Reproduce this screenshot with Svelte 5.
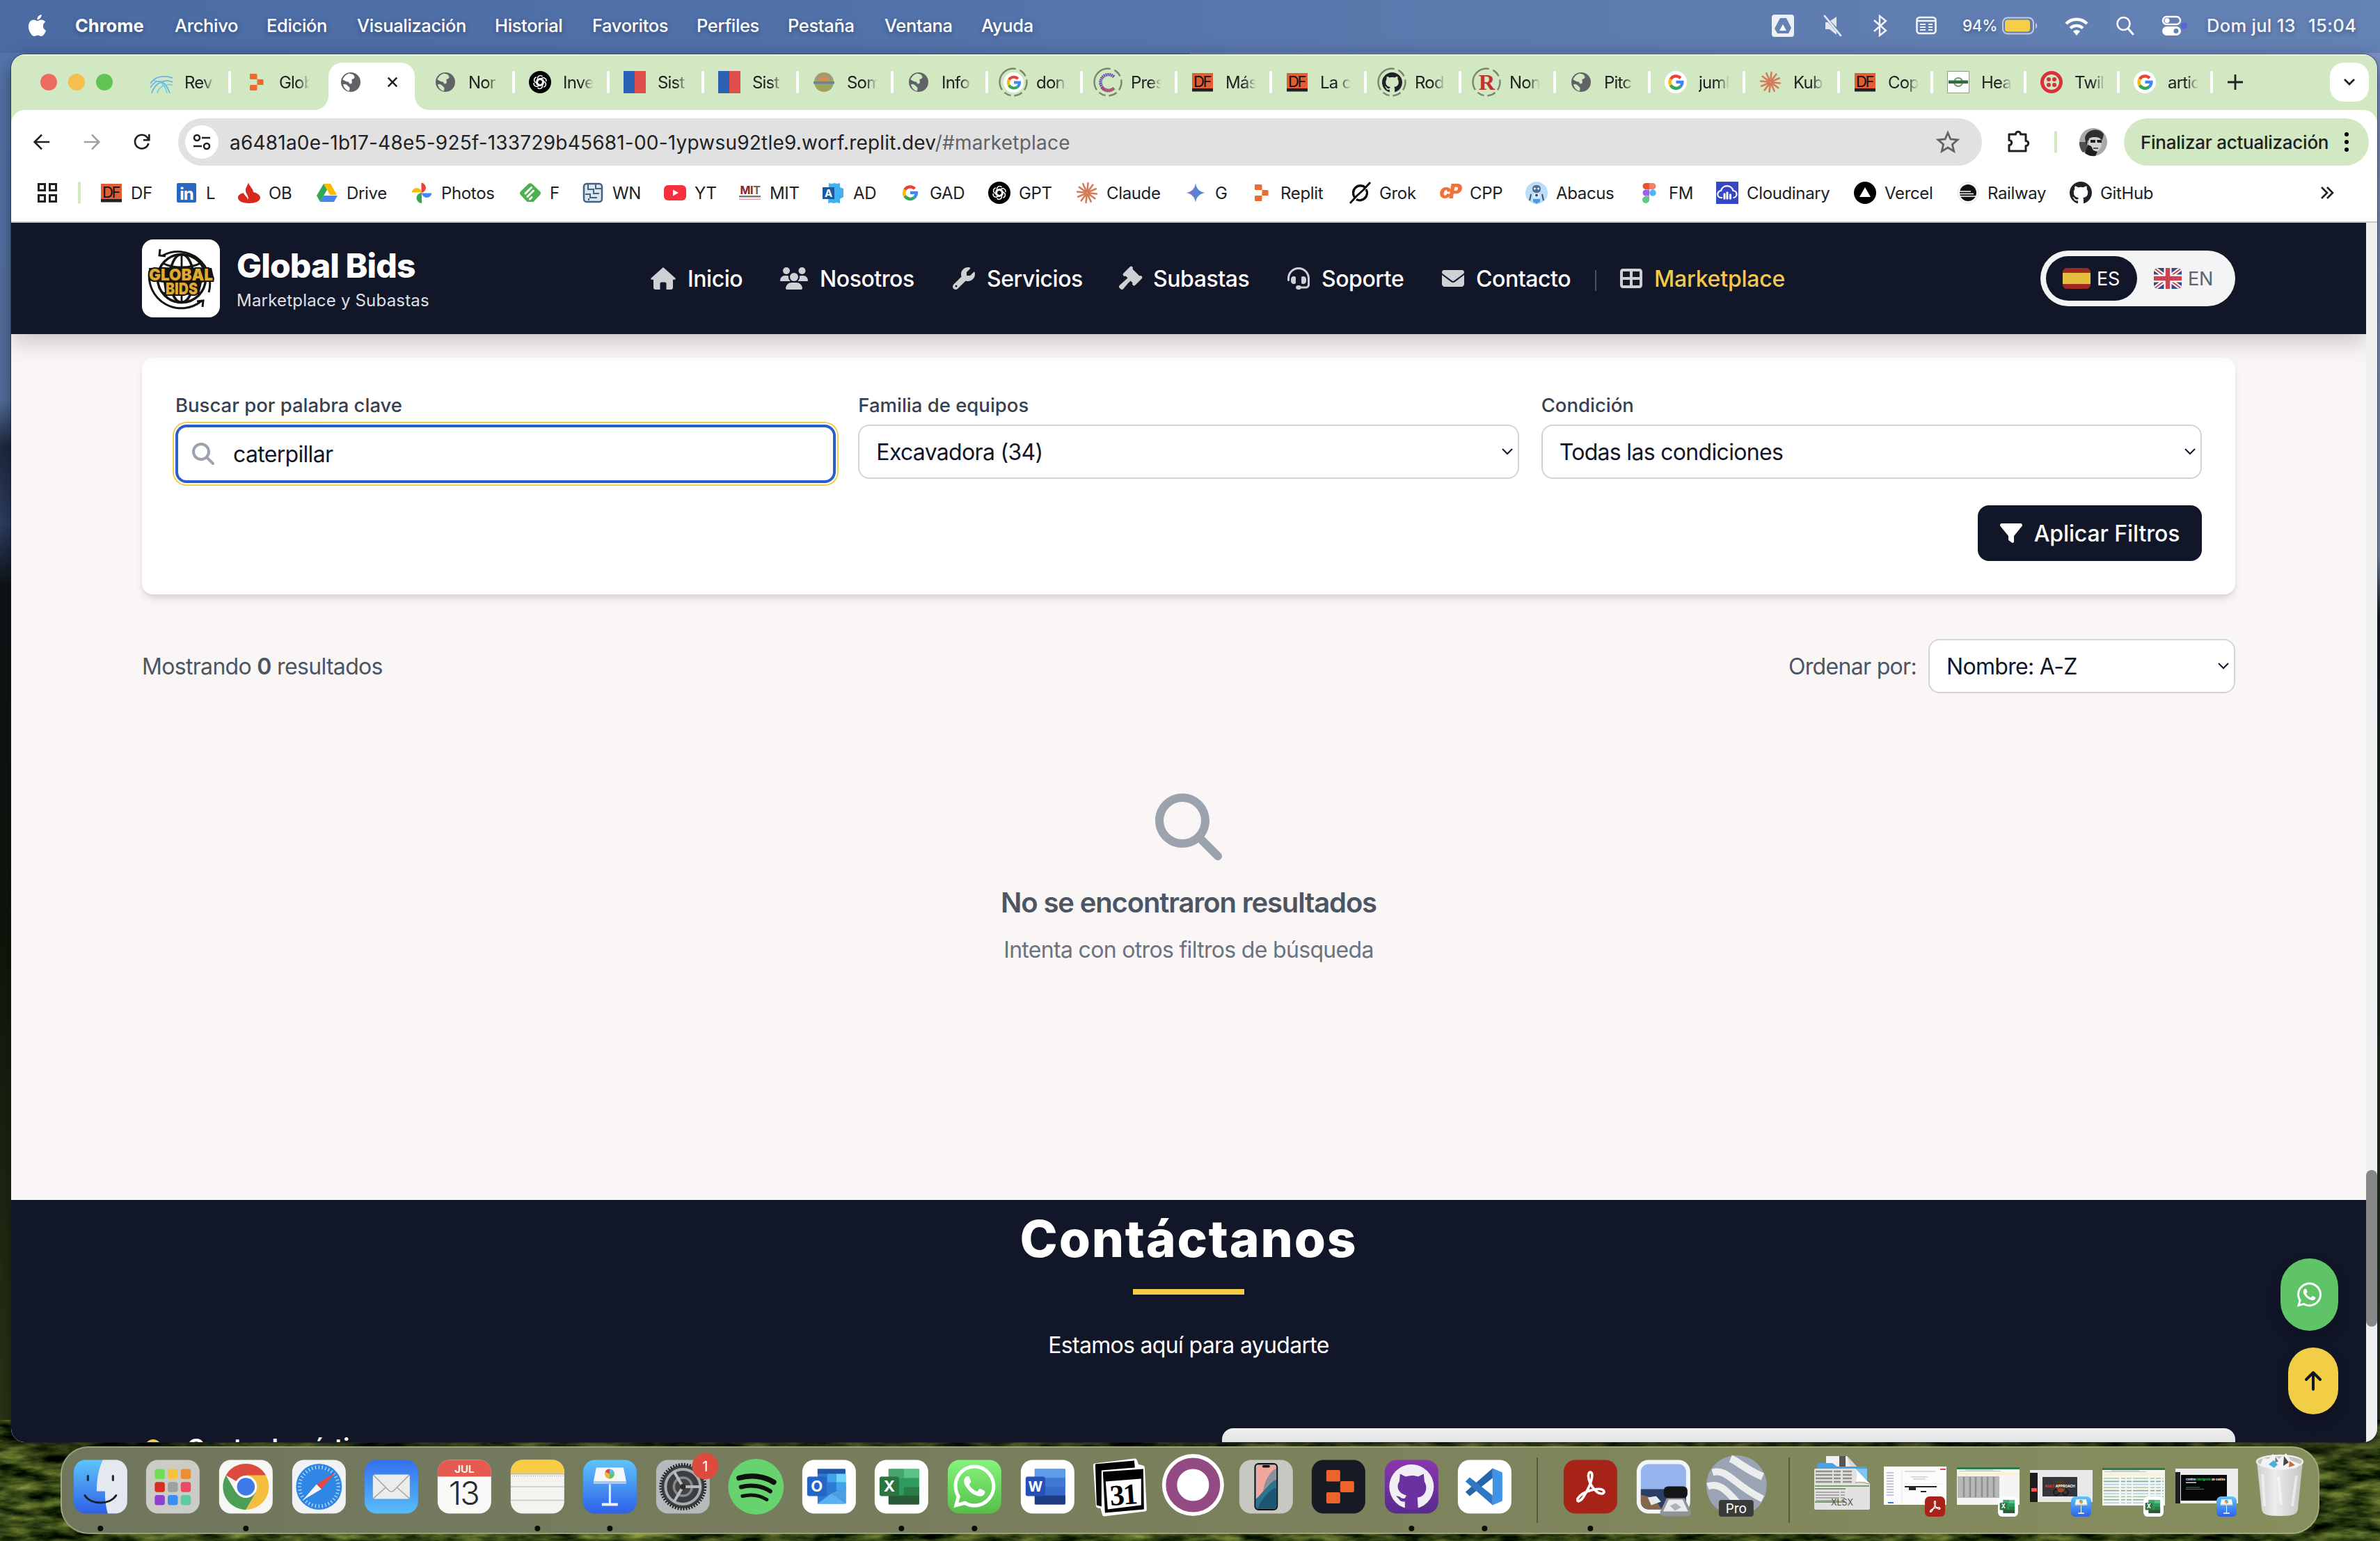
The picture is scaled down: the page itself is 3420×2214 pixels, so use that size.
<script>
  const menus = [
    ['Archivo', 132], ['Edición', 130], ['Visualización', 198], ['Historial', 140], ['Favoritos', 150],
    ['Perfiles', 131], ['Pestaña', 139], ['Ventana', 139], ['Ayuda', 90]
  ];

  const tabs = [
    { icon: 'waves', label: 'Rev', w: 136 },
    { icon: 'replit', label: 'Glob', w: 136, plain: true },
    { icon: 'globe', active: true, w: 136, plain: true },
    { icon: 'globe', label: 'Nor', w: 136 },
    { icon: 'gpt', label: 'Inve', w: 136 },
    { icon: 'flag', label: 'Sist', w: 136 },
    { icon: 'flag', label: 'Sist', w: 136 },
    { icon: 'crest', label: 'Som', w: 136 },
    { icon: 'globe', label: 'Info', w: 136 },
    { icon: 'google', label: 'don', w: 136, ring: true },
    { icon: 'dots', label: 'Pres', w: 136, ring: true },
    { icon: 'df', label: 'Más', w: 136 },
    { icon: 'df', label: 'La c', w: 136 },
    { icon: 'github', label: 'Rod', w: 136, ring: true },
    { icon: 'letterR', label: 'Non', w: 136, ring: true },
    { icon: 'globe', label: 'Pitc', w: 136 },
    { icon: 'google', label: 'jumb', w: 136 },
    { icon: 'claude', label: 'Kub', w: 136 },
    { icon: 'df', label: 'Cop', w: 134 },
    { icon: 'health', label: 'Hea', w: 134 },
    { icon: 'twilio', label: 'Twili', w: 134 },
    { icon: 'google', label: 'artic', w: 134 }
  ];

  const bookmarks = [
    ['df', 'DF', 108], ['linkedin', 'L', 90], ['flame', 'OB', 112], ['drive', 'Drive', 136], ['photos', 'Photos', 156],
    ['feedly', 'F', 90], ['circuit', 'WN', 118], ['youtube', 'YT', 108], ['mit', 'MIT', 120], ['adbadge', 'AD', 110],
    ['googleBare', 'GAD', 128], ['gpt', 'GPT', 126], ['claude', 'Claude', 156], ['gemini', 'G', 94], ['replit', 'Replit', 142],
    ['grok', 'Grok', 130], ['cpanel', 'CPP', 124], ['robot', 'Abacus', 162], ['figma', 'FM', 112],
    ['cloud', 'Cloudinary', 198], ['vercel', 'Vercel', 148], ['railway', 'Railway', 162], ['github', 'GitHub', 130]
  ];

  const nav = [
    ['home', 'Inicio', 186], ['users', 'Nosotros', 248], ['wrench', 'Servicios', 239], ['gavel', 'Subastas', 242],
    ['headset', 'Soporte', 222], ['envelope', 'Contacto', 184]
  ];

  const dockApps = [
    ['finder', 1], ['launchpad', 0], ['chrome', 1], ['safari', 0], ['mail', 0], ['calendar', 0], ['notes', 1],
    ['keynote', 1], ['settings', 0], ['spotify', 0], ['outlook', 0], ['excel', 1], ['whatsapp', 1], ['word', 0],
    ['calendar31', 0], ['ring', 0], ['phone', 0], ['replit', 0], ['github', 1], ['vscode', 1]
  ];
  const dockTools = [['acrobat', 1], ['preview', 0], ['earth', 0]];
  const dockFiles = ['xlsx', 'winPdf', 'winSheet', 'winKey', 'winSheet2', 'winTerm', 'trash'];

  const githubPath = 'M8 0C3.58 0 0 3.58 0 8c0 3.54 2.29 6.53 5.47 7.59.4.07.55-.17.55-.38 0-.19-.01-.82-.01-1.49-2.01.37-2.53-.49-2.69-.94-.09-.23-.48-.94-.82-1.13-.28-.15-.68-.52-.01-.53.63-.01 1.08.58 1.23.82.72 1.21 1.87.87 2.33.66.07-.52.28-.87.51-1.07-1.78-.2-3.64-.89-3.64-3.95 0-.87.31-1.59.82-2.15-.08-.2-.36-1.02.08-2.12 0 0 .67-.21 2.2.82.64-.18 1.32-.27 2-.27s1.36.09 2 .27c1.53-1.04 2.2-.82 2.2-.82.44 1.1.16 1.92.08 2.12.51.56.82 1.27.82 2.15 0 3.07-1.87 3.75-3.65 3.95.29.25.54.73.54 1.48 0 1.07-.01 1.93-.01 2.2 0 .21.15.46.55.38A8.01 8.01 0 0016 8c0-4.42-3.58-8-8-8z';
  const whatsappPath = 'M380.9 97.1C339 55.1 283.2 32 223.9 32c-122.4 0-222 99.6-222 222 0 39.1 10.2 77.3 29.6 111L0 480l117.7-30.9c32.4 17.7 68.9 27 106.1 27h.1c122.3 0 224.1-99.6 224.1-222 0-59.3-25.2-115-67.1-157zm-157 341.6c-33.2 0-65.7-8.9-94-25.7l-6.7-4-69.8 18.3L72 359.2l-4.4-7c-18.5-29.4-28.2-63.3-28.2-98.2 0-101.7 82.8-184.5 184.6-184.5 49.3 0 95.6 19.2 130.4 54.1 34.8 34.9 56.2 81.2 56.1 130.5 0 101.8-84.9 184.6-186.6 184.6zm101.2-138.2c-5.5-2.8-32.8-16.2-37.9-18-5.1-1.9-8.8-2.8-12.5 2.8-3.7 5.6-14.3 18-17.6 21.8-3.2 3.7-6.5 4.2-12 1.4-32.6-16.3-54-29.1-75.5-66-5.7-9.8 5.7-9.1 16.3-30.3 1.8-3.7.9-6.9-.5-9.7-1.4-2.8-12.5-30.1-17.1-41.2-4.5-10.8-9.1-9.3-12.5-9.5-3.2-.2-6.9-.2-10.6-.2-3.7 0-9.7 1.4-14.8 6.9-5.1 5.6-19.4 19-19.4 46.3 0 27.3 19.9 53.7 22.6 57.4 2.8 3.7 39.1 59.7 94.8 83.8 35.2 15.2 49 16.5 66.6 13.9 10.7-1.6 32.8-13.4 37.4-26.4 4.6-13 4.6-24.1 3.2-26.4-1.3-2.5-5-3.9-10.5-6.6z';
  const searchPath = 'M416 208c0 45.9-14.9 88.3-40 122.7L502.6 457.4c12.5 12.5 12.5 32.8 0 45.3s-32.8 12.5-45.3 0L330.7 376c-34.4 25.2-76.8 40-122.7 40C93.1 416 0 322.9 0 208S93.1 0 208 0S416 93.1 416 208zM208 352a144 144 0 1 0 0-288 144 144 0 1 0 0 288z';
  const rays = Array.from({ length: 12 }, (_, i) => i * 30);
  const ticks = Array.from({ length: 36 }, (_, i) => i * 10);
  const rows = [0, 1, 2, 3, 4, 5, 6, 7, 8];
</script>

{#snippet googleG()}
  <g fill="none" stroke-width="4.400">
    <path d="M22.400 10.200A9 9 0 0 0 8.200 11.600" stroke="#ea4335" />
    <path d="M8.200 11.600A9 9 0 0 0 8.200 20.400" stroke="#fbbc05" />
    <path d="M8.200 20.400A9 9 0 0 0 21.800 22.800" stroke="#34a853" />
    <path d="M21.800 22.800A9 9 0 0 0 24.900 15.900H16" stroke="#4285f4" />
  </g>
{/snippet}

{#snippet replitMark()}
  <path d="M7 4h9a1.500 1.500 0 0 1 1.500 1.500V12H8.500A1.500 1.500 0 0 1 7 10.500zM17.500 12H25a1.500 1.500 0 0 1 1.500 1.500V20h-9zM7 21.500A1.500 1.500 0 0 1 8.500 20h9v6.500A1.500 1.500 0 0 1 16 28H8.500A1.500 1.500 0 0 1 7 26.500z" fill="#ec6b2d" />
{/snippet}

{#snippet favicon(name)}
  <svg class="fav" viewBox="0 0 32 32">
    {#if name === 'waves'}
      <g fill="none" stroke="#69a9e8" stroke-width="1.500"><path d="M0 18C8 6 20 6 32 10" /><path d="M0 24C10 8 22 14 28 32" /><path d="M2 32C6 18 20 10 32 16" /><path d="M10 32C12 22 22 18 32 20M4 14c12 0 18 8 20 18" stroke="#5fd0f0" /></g>
    {:else if name === 'replit'}
      {@render replitMark()}
    {:else if name === 'globe'}
      <circle cx="16" cy="16" r="14" fill="#5f6368" />
      <path class="globe-land" d="M14 3.500c-4 1-8 4-9.500 9 3 1 5 3 7.500 3 2 0 1 3 3.500 3 3 0 2.500-3 2-4.500-1-3 4-2 4-5.500 0-2-2-2-2-3.500zM5 19c3 0 5 0 6.500 2s3 1.500 3 4-1 2.500-1 4C9 27.500 6 24 5 19z" />
    {:else if name === 'gpt'}
      <circle cx="16" cy="16" r="16" fill="#000" />
      <g fill="none" stroke="#fff" stroke-width="1.500">
        {#each [0, 60, 120, 180, 240, 300] as a}
          <path d="M12.500 17.800V10.500a4 4 0 0 1 7-2.500M12.500 12.500l3.500-2 3.800 2.200" transform="rotate({a} 16 16)" />
        {/each}
      </g>
    {:else if name === 'flag'}
      <path d="M0 0h16v32H0z" fill="#2b62b5" /><path d="M16 0h16v32H16z" fill="#de4f4b" />
    {:else if name === 'crest'}
      <circle cx="16" cy="16" r="14" fill="#a39a72" /><circle cx="16" cy="14" r="8" fill="#b99567" /><circle cx="16" cy="12" r="3.500" fill="#d98a4c" />
      <path d="M1 15h30v3.500H1z" fill="#5f8a9b" /><path d="M3 19h26l-6 9H9z" fill="#9ca45c" />
    {:else if name === 'google'}
      <circle cx="16" cy="16" r="16" fill="#fff" /><g transform="translate(.5 0)">{@render googleG()}</g>
    {:else if name === 'googleBare'}
      {@render googleG()}
    {:else if name === 'dots'}
      <path d="M25 7A12.500 12.500 0 1 0 25 25" fill="none" stroke="#5a45b0" stroke-width="5" stroke-dasharray="2 1" />
      <path d="M6 24a12.500 12.500 0 0 0 19 1" fill="none" stroke="#c8495a" stroke-width="5" stroke-dasharray="2 1" />
    {:else if name === 'df'}
      <path d="M1 3h30v26H1z" fill="#e25c36" /><path d="M1 25h30v4.500H1z" fill="#222" />
      <text x="15" y="22.500" class="fv" font-size="22" text-anchor="middle" fill="#111" letter-spacing="-2.500">DF</text>
    {:else if name === 'github'}
      <path d={githubPath} fill="#1f2328" transform="scale(2)" />
    {:else if name === 'letterR'}
      <text x="16" y="28" class="serif bold" font-size="36" text-anchor="middle" fill="#c0342c">R</text>
    {:else if name === 'claude'}
      <g stroke="#d57a58" stroke-width="2.600" stroke-linecap="round">
        {#each rays as a}<path d="M16 14V2" transform="rotate({a + 6} 16 16)" />{/each}
      </g>
    {:else if name === 'health'}
      <path d="M.5.5h31v31H.5z" fill="#fff" stroke="#8aa08a" /><circle cx="16" cy="16" r="6" fill="none" stroke="#6aa077" stroke-width="2" /><path d="M2 13.500h28v4.500H2z" fill="#2f6b3d" />
    {:else if name === 'twilio'}
      <circle cx="16" cy="16" r="13.500" fill="none" stroke="#dc2f3c" stroke-width="5" />
      <g fill="#dc2f3c"><circle cx="12" cy="12" r="3" /><circle cx="20" cy="12" r="3" /><circle cx="12" cy="20" r="3" /><circle cx="20" cy="20" r="3" /></g>
    {:else if name === 'linkedin'}
      <rect x="2" y="2" width="28" height="28" rx="2" fill="#2867c2" /><text x="16" y="26" class="fv bold" font-size="24" text-anchor="middle" fill="#fff" letter-spacing="-1">in</text>
    {:else if name === 'flame'}
      <path d="M15 1c0 4 7 9 7 14 5 1 10 4 10 8 0 5-7 8-16 8S0 28 0 23c0-4 4-6 8-7 0 3 6 6 6 10 3-5-4-9-3-15 .5-3 3-6 4-10z" fill="#d8281c" />
    {:else if name === 'drive'}
      <path d="M11 3h10l9 16H20z" fill="#fbbc04" /><path d="M11 3l5 9-10 17-5-9z" fill="#34a853" /><path d="M6 29l5-9h20l-5 9z" fill="#4285f4" /><path d="M11.500 20L16 12l4.500 8z" fill="#fff" />
    {:else if name === 'photos'}
      <path d="M15.500 16V1.500a7.300 7.300 0 0 1 0 14.500z" fill="#ea4335" /><path d="M1.500 15.500a7.300 7.300 0 0 1 14.500 0z" fill="#fbbc04" /><path d="M30.500 16.500a7.300 7.300 0 0 1-14.500 0z" fill="#4285f4" /><path d="M16 16v15a7.300 7.300 0 0 1 0-15z" fill="#34a853" />
    {:else if name === 'feedly'}
      <path d="M13 3.500a4 4 0 0 1 6 0l11 10.500a4 4 0 0 1 0 5L20.500 29h-9L2 19a4 4 0 0 1 0-5z" fill="#4caf50" /><path d="M9 17l8.500-8.500M12 21.500L20.500 13M15.500 25l2.500-2.500" stroke="#fff" stroke-width="3" stroke-linecap="round" />
    {:else if name === 'circuit'}
      <rect x="3" y="3" width="26" height="26" rx="4" fill="#dce6ee" stroke="#44617e" stroke-width="2.500" /><path d="M9 4v7h8v6h8M5 18h7v5h10M20 4v6h8M10 27v-3" fill="none" stroke="#44617e" stroke-width="2" />
    {:else if name === 'youtube'}
      <rect y="5" width="32" height="22" rx="6" fill="#f5313d" /><path d="M13 11.500v9l8-4.500z" fill="#fff" />
    {:else if name === 'mit'}
      <text x="16" y="18" class="fv bold" font-size="16" text-anchor="middle" fill="#8a2432">MI<tspan fill="#666">T</tspan></text><path d="M0 20h31v2.500H0z" fill="#777" /><path d="M0 24.500h31v1.500H0z" fill="#d9a0a6" />
    {:else if name === 'adbadge'}
      <path d="M9 2l4 1 4-1 4 1 4-1v6l5 2v12l-5 3v6l-5-1-4 1-4-1-4 1z" fill="#45b0f0" /><rect y="8" width="17" height="17" fill="#1559a8" /><text x="8.500" y="22" class="fv bold" font-size="15" text-anchor="middle" fill="#fff">A</text>
    {:else if name === 'gemini'}
      <path d="M16 2c1 8 6 13 14 14-8 1-13 6-14 14-1-8-6-13-14-14 8-1 13-6 14-14z" fill="url(#gem)" />
    {:else if name === 'grok'}
      <path d="M24 8.500A10.500 10.500 0 0 0 8.500 22.500M11 25.500A10.500 10.500 0 0 0 25 11" fill="none" stroke="#0a0a0a" stroke-width="3.400" /><path d="M31 1L21 12M2 31l9-10 10-9" fill="none" stroke="#0a0a0a" stroke-width="2.800" />
    {:else if name === 'cpanel'}
      <text x="15" y="24" class="fv black" font-size="28" text-anchor="middle" fill="#f2703a" letter-spacing="-3" font-style="italic">cP</text>
    {:else if name === 'robot'}
      <circle cx="16" cy="16" r="16" fill="#bcdcf8" /><rect x="10" y="5" width="12" height="11" rx="5" fill="#4d6f94" /><circle cx="13.500" cy="10" r="1.500" fill="#fff" /><circle cx="18.500" cy="10" r="1.500" fill="#fff" /><path d="M12 17h8l1 6H11z" fill="#e6eef6" /><circle cx="16" cy="19.500" r="2" fill="#38536f" /><path d="M11 25h10v4l-5 3-5-3z" fill="#4c9ae6" /><path d="M8 18l-2 9M24 18l2 9" stroke="#38536f" stroke-width="2" />
    {:else if name === 'figma'}
      <path d="M11 2h5v9h-5a4.500 4.500 0 0 1 0-9z" fill="#e8552d" /><path d="M16 2h5a4.500 4.500 0 0 1 0 9h-5z" fill="#f4806c" /><path d="M16 11.500v9h-5a4.500 4.500 0 0 1 0-9z" fill="#a05cf5" /><circle cx="21" cy="16" r="4.700" fill="#4fb5f7" /><path d="M11 21h5v5a5 5 0 1 1-5-5z" fill="#5bcb86" />
    {:else if name === 'cloud'}
      <path d="M0 0h32v32H0z" fill="#3448c5" /><path d="M9 23H7.500a5 5 0 0 1-.5-10A9 9 0 0 1 24.500 13a5 5 0 0 1 0 10" fill="none" stroke="#fff" stroke-width="2.200" /><path d="M11 17h2v8h-2zM15 15h2v10h-2zM19.500 18h2v7h-2z" fill="#fff" stroke="#fff" />
    {:else if name === 'vercel'}
      <circle cx="16" cy="16" r="16" fill="#000" /><path d="M16 8l8 14H8z" fill="#fff" />
    {:else if name === 'railway'}
      <circle cx="16" cy="16" r="15" fill="#fff" stroke="#ddd" /><circle cx="16" cy="16" r="12" fill="#111" /><path d="M4 14h16M4 17.500h20M4 21h23" stroke="#fff" stroke-width="1.400" />
    {/if}
  </svg>
{/snippet}

{#snippet pageIcon(name)}
  {#if name === 'home'}
    <svg class="i36" viewBox="0 0 36 32"><path d="M18 0l17.300 15.400c.8.900.4 2.400-1 2.400H32V29a3 3 0 0 1-3 3h-6.500v-8.500a2 2 0 0 0-2-2h-5a2 2 0 0 0-2 2V32H7a3 3 0 0 1-3-3V17.800H1.700c-1.400 0-1.800-1.500-1-2.400z" /></svg>
  {:else if name === 'users'}
    <svg class="i40" viewBox="0 0 40 32"><circle cx="9" cy="5" r="5" /><circle cx="31.500" cy="5" r="5" /><circle cx="20" cy="14" r="6" /><path d="M0 18.700A6.700 6.700 0 0 1 6.700 12h2.600c1 0 2 .2 2.800.6A8 8 0 0 0 14.700 20H1.300C.6 20 0 19.400 0 18.700zM25.300 20a8 8 0 0 0 2.600-7.400c.8-.4 1.800-.6 2.800-.6h2.600a6.700 6.700 0 0 1 6.700 6.700c0 .7-.6 1.300-1.300 1.300zM8 30.300A8.300 8.300 0 0 1 16.300 22h7.400a8.300 8.300 0 0 1 8.300 8.300c0 .9-.7 1.700-1.700 1.700H9.700C8.700 32 8 31.200 8 30.300z" /></svg>
  {:else if name === 'wrench'}
    <svg class="i32" viewBox="0 0 512 512"><path fill-rule="evenodd" d="M352 320c88.400 0 160-71.600 160-160c0-15.300-2.200-30.100-6.200-44.200c-3.100-10.800-16.400-13.200-24.300-5.300l-76.800 76.800c-3 3-7.100 4.700-11.300 4.700H336c-8.800 0-16-7.200-16-16V118.600c0-4.200 1.700-8.300 4.700-11.300l76.800-76.800c7.900-7.900 5.400-21.200-5.300-24.300C382.100 2.200 367.300 0 352 0C263.600 0 192 71.600 192 160c0 19.100 3.400 37.500 9.500 54.500L19.900 396.100C7.200 408.800 0 426.100 0 444.100C0 481.600 30.400 512 67.900 512c18 0 35.300-7.200 48-19.900L297.500 310.500c17 6.200 35.400 9.500 54.500 9.500zM80 408a24 24 0 1 1 0 48 24 24 0 1 1 0-48z" /></svg>
  {:else if name === 'gavel'}
    <svg class="i32" viewBox="0 0 32 32"><g transform="rotate(45 19.500 12.500)"><rect x="10" y="5.500" width="19" height="14" rx="1" /><rect x="7.500" y="3.500" width="5" height="18" rx="2.300" /><rect x="26.500" y="3.500" width="5" height="18" rx="2.300" /></g><path d="M14 14l4 4-4 4-.5.3L6.300 31a3 3 0 0 1-4.300 0l-1-1a3 3 0 0 1 0-4.300L9.500 18z" /></svg>
  {:else if name === 'headset'}
    <svg class="i32" viewBox="0 0 512 512"><path d="M256 48C141.100 48 48 141.100 48 256v40c0 13.300-10.700 24-24 24s-24-10.700-24-24V256C0 114.600 114.600 0 256 0S512 114.600 512 256V400.100c0 48.600-39.400 88-88.100 88L313.600 488c-8.300 14.300-23.800 24-41.600 24H240c-26.500 0-48-21.500-48-48s21.500-48 48-48h32c17.800 0 33.300 9.700 41.600 24l110.400 .1c22.100 0 40-17.900 40-40V256c0-114.900-93.100-208-208-208zM144 208h16c17.700 0 32 14.300 32 32V352c0 17.700-14.300 32-32 32H144c-35.300 0-64-28.700-64-64V272c0-35.300 28.700-64 64-64zm224 0c35.300 0 64 28.700 64 64v48c0 35.300-28.700 64-64 64H352c-17.700 0-32-14.300-32-32V240c0-17.700 14.300-32 32-32h16z" /></svg>
  {:else if name === 'envelope'}
    <svg class="i32" viewBox="0 0 512 512"><path d="M48 64C21.500 64 0 85.500 0 112c0 15.100 7.100 29.300 19.200 38.400L236.800 313.600c11.400 8.500 27 8.500 38.400 0L492.800 150.400c12.100-9.100 19.200-23.300 19.200-38.400c0-26.500-21.500-48-48-48H48zM0 176V384c0 35.300 28.700 64 64 64H448c35.300 0 64-28.700 64-64V176L294.400 339.200c-22.800 17.100-54 17.100-76.800 0L0 176z" /></svg>
  {:else if name === 'grid'}
    <svg class="i32" viewBox="0 0 512 512"><path fill-rule="evenodd" d="M448 96V224H288V96H448zm0 192V416H288V288H448zM224 224H64V96H224V224zM64 288H224V416H64V288zM64 32C28.700 32 0 60.700 0 96V416c0 35.300 28.700 64 64 64H448c35.300 0 64-28.700 64-64V96c0-35.300-28.700-64-64-64H64z" /></svg>
  {/if}
{/snippet}

{#snippet acrobatGlyph()}
  <path d="M20 56c4-7 11-10 18-12 7-2 17-4 20 1 1 4-5 5-10 1C40 40 34 27 36 20c1-4 5-3 5 2 0 9-8 24-13 32-3 5-9 8-8 2z" fill="none" stroke="#fff" stroke-width="3.600" stroke-linejoin="round" />
{/snippet}
{#snippet excelGlyph()}
  <path d="M20 13h44v51H20z" fill="#2f9a5d" /><path d="M42 13h20a2 2 0 0 1 2 2v11H42z" fill="#5cc188" /><path d="M20 13h22v13H20z" fill="#46a56b" /><path d="M42 39h22v12H42z" fill="#2c7a46" /><path d="M20 51h44v11a2 2 0 0 1-2 2H22a2 2 0 0 1-2-2z" fill="#2a5a37" />
  <rect x="7" y="24" width="28" height="28" rx="3" fill="#2c7540" /><text x="21" y="46" class="fv bold" font-size="22" text-anchor="middle" fill="#fff">X</text>
{/snippet}
{#snippet keynoteGlyph()}
  <path d="M19 11h39l4 20H15z" fill="#f4f7fa" /><path d="M15 31h47v3.500H15z" fill="#b6c6da" />
  <circle cx="38" cy="20" r="7" fill="#f5b53c" /><path d="M38 20V13a7 7 0 0 1 7 7z" fill="#5dbcf0" /><path d="M45 20a7 7 0 0 1-7 7v-7z" fill="#62c554" /><path d="M38 20v-7a7 7 0 0 0-6 4z" fill="#e1473d" />
  <path d="M37 35h3v28h-3zM27 62h23v4H27z" fill="#eef2f6" />
{/snippet}
{#snippet badge(kind)}
  <g transform="translate(66 72) scale(.377)">
    {#if kind === 'pdf'}<rect width="77" height="77" rx="17" fill="#a82317" />{@render acrobatGlyph()}
    {:else if kind === 'xls'}<rect width="77" height="77" rx="17" fill="#fff" />{@render excelGlyph()}
    {:else}<rect width="77" height="77" rx="17" fill="url(#blue)" />{@render keynoteGlyph()}{/if}
  </g>
{/snippet}
{#snippet sheet()}
  <path d="M7 30h90v54H7z" fill="#f4f6f4" /><path d="M7 30h90v3H7z" fill="#2b7a4b" /><path d="M7 38h90v3H7z" fill="#fbf0cf" />
  <path d="M10 35.500h60M20 34h40" stroke="#b9bfbb" stroke-width="1" />
{/snippet}

{#snippet dockIcon(name, running)}
  <svg class="dock-icon" viewBox="0 0 104.700 126">
    {#if ['xlsx', 'winPdf', 'winSheet', 'winKey', 'winSheet2', 'winTerm', 'trash'].includes(name)}
      {#if name === 'xlsx'}
        <path d="M29 14h30l15 16v20H29z" fill="#f2f2f2" /><path d="M48 14h9v18h-9z" fill="#555" /><path d="M59 14l15 16H64z" fill="#d8d8d8" />
        <path d="M16 27a3 3 0 0 1 3-3h19l7 5h40a3 3 0 0 1 3 3v22H16z" fill="#4aa3e0" /><path d="M70 32h18v22z" fill="#7cc6f6" />
        <path d="M12 34a2 2 0 0 1 2-2h57l21 22v35a2 2 0 0 1-2 2H14a2 2 0 0 1-2-2z" fill="#e2e2e0" />
        {#each [0, 1, 2, 3] as r}<path d="M14 {36 + r * 5}h52" stroke="#8f8f8c" stroke-width="2.400" stroke-dasharray="24 2 10 3" />{/each}
        {#each [0, 1, 2, 3] as r}<path d="M14 {66 + r * 4}h42" stroke="#a9a9a6" stroke-width="1.800" stroke-dasharray="34 2" />{/each}
        <path d="M71 32c4 6 2 14 1 20 7-1 14 0 20 2z" fill="#fff" /><path d="M71 52c7-1 14 0 20 2" fill="none" stroke="#b8a69c" stroke-width="1.500" />
        <path d="M13 57h78M13 61h44M13 80h44" stroke="#7f9c76" stroke-width="1.800" />
        <text x="52" y="85" class="fv" font-size="12.500" text-anchor="middle" fill="#555">XLSX</text>
      {:else if name === 'winPdf'}
        <path d="M7 29h90v55H7z" fill="#fbfbfc" /><path d="M33 33v51" stroke="#e6e6ea" /><path d="M36 54h56" stroke="#ececf0" />
        {#each rows as r}<path d="M11 {38 + r * 4}h10" stroke="#b4b8c8" stroke-width="1.500" />{/each}
        <path d="M37 36h44M46 44h24M49 47h18" stroke="#b9b9bd" /><path d="M37 57h46v2H37zM43 58h10v5H43zM60 64h8v2h-8z" fill="#222" /><path d="M13 80h8v2h-8z" fill="#3b78e7" /><path d="M88 32h8v2h-8z" fill="#e6405a" />
        {@render badge('pdf')}
      {:else if name === 'winSheet'}
        {@render sheet()}<path d="M8 43h60v31H8z" fill="#b7b9b7" />
        {#each [17, 26, 34, 43, 51, 60] as x}<path d="M{x} 44v29" stroke="#8d908d" stroke-width="2.500" />{/each}
        {@render badge('xls')}
      {:else if name === 'winKey'}
        <path d="M7 34h90v46H7z" fill="#e8e8ea" /><path d="M7 38h11v42H7z" fill="#1c1c1e" /><path d="M9 60h8v5H9z" fill="#e55" /><path d="M25 44h50v28H25z" fill="#34363a" />
        <circle cx="45" cy="66" r="4" fill="none" stroke="#111" stroke-width="1.500" /><circle cx="58" cy="66" r="4" fill="none" stroke="#111" stroke-width="1.500" /><path d="M44 50l10-3 4 8-4 8h-8z" fill="#4e3a24" /><path d="M46 60l12 1-4 5h-6z" fill="#a04a1d" />
        <text x="50" y="59.500" class="fv bold" font-size="5" text-anchor="middle" fill="#fff"><tspan fill="#e33">AGILE</tspan> APPROACH</text>
        {@render badge('key')}
      {:else if name === 'winSheet2'}
        <g transform="translate(0 1)">{@render sheet()}</g>
        {#each rows as r}<path d="M9 {46 + r * 4.400}h86" stroke={r % 3 === 0 ? '#a9cba4' : r % 3 === 1 ? '#9aa59c' : '#a5d2e4'} stroke-width="1.600" stroke-dasharray="22 3 6 2 7 2" />{/each}
        {@render badge('xls')}
      {:else if name === 'winTerm'}
        <path d="M7 32h90v50H7z" fill="#ececee" /><path d="M7 37h7v45H7z" fill="#1d1f24" /><path d="M15 41h66v37H15z" fill="#060606" />
        <text x="22" y="49.500" class="fv bold" font-size="4" fill="#fff">Control <tspan fill="#35c46a">inteligente</tspan> de Gastos</text>
        <path d="M22 52h15" stroke="#ddd" stroke-width="1.500" /><path d="M22 59h20M22 61.500h26" stroke="#2c8a4e" stroke-width="1.200" />
        {@render badge('key')}
      {:else}
        <path d="M19 22l7 68c1 7 5 10 26 10s25-3 26-10l7-68z" fill="url(#bin)" />
        <ellipse cx="52" cy="22" rx="33" ry="9" fill="#c2c2c2" stroke="#ededed" stroke-width="2.500" />
        <path d="M24 26l4-9 8 1 6-7 9 7 10-8 7 10 12 5-4 6-20 3-17-1z" fill="#f3f3f3" /><path d="M36 26l7-6 6 6-5 5z" fill="#4ab0dc" /><path d="M58 14l7 9-8 5z" fill="#4c4440" /><path d="M66 21l8 6-9 3z" fill="#c96a3a" /><path d="M46 15l4 7-5 1z" fill="#777" />
        <path d="M27 40l3 46M50 44l4 40M76 42l-6 44" stroke="#fff" stroke-opacity=".5" stroke-width="4" />
      {/if}
    {:else}
      <g transform="translate(13.850 19.500)">
        {#if name === 'finder'}
          <rect width="77" height="77" rx="17" fill="url(#blue)" /><path d="M42 0h18a17 17 0 0 1 17 17v43a17 17 0 0 1-17 17H49c-3-10-4-20-4-32H33C33 28 36 12 42 0z" fill="#e4e9f0" />
          <path d="M20.500 23v6M56.500 23v6" stroke="#22303c" stroke-width="3.200" stroke-linecap="round" /><path d="M16 51c9 14 36 14 45 0" fill="none" stroke="#1a2026" stroke-width="3" stroke-linecap="round" />
        {:else if name === 'launchpad'}
          <rect width="77" height="77" rx="17" fill="#cbccc6" />
          {#each ['#6fe052', '#f5c33b', '#ec8f33', '#d92d22', '#9aa2a4', '#ec4a62', '#9340cf', '#3a8df5', '#5fcba0'] as c, i}
            <rect x={12.500 + (i % 3) * 18.700} y={13 + Math.floor(i / 3) * 18.700} width="14.500" height="14.500" rx="3.500" fill={c} />
          {/each}
        {:else if name === 'chrome'}
          <rect width="77" height="77" rx="17" fill="#f6f6f5" />
          <path d="M38.500 38.500L9.800 22A33 33 0 0 1 67.100 22z" fill="#dd4b3e" /><path d="M38.500 38.500V22H67.100A33 33 0 0 1 38.500 71.500L52.800 46.800z" fill="#f5be3f" /><path d="M38.500 38.500L52.800 46.800 38.500 71.500A33 33 0 0 1 9.900 22L24.200 46.800z" fill="#4c9d55" />
          <circle cx="38.500" cy="38.500" r="16" fill="#fff" /><circle cx="38.500" cy="38.500" r="12.800" fill="#3f7be8" />
        {:else if name === 'safari'}
          <rect width="77" height="77" rx="17" fill="#f1f2f3" /><circle cx="38.500" cy="38.500" r="33" fill="#2f86e4" />
          <g stroke="#cfe6fb" stroke-width="1.200">{#each ticks as a}<path d="M38.500 8v5" transform="rotate({a} 38.500 38.500)" />{/each}</g>
          <path d="M62 18L42 42l-7-7z" fill="#e5493c" /><path d="M15 58l20-23 7 7z" fill="#f5f5f5" />
        {:else if name === 'mail'}
          <rect width="77" height="77" rx="17" fill="url(#mail)" /><rect x="12" y="21" width="53" height="35" rx="3" fill="#ececec" /><path d="M13 22l22 22c2 2 5 2 7 0l22-22M13 55l18-16M64 55L46 39" fill="none" stroke="#a5a5a5" stroke-width="1.600" />
        {:else if name === 'calendar'}
          <rect width="77" height="77" rx="17" fill="#f9f9f8" /><path d="M0 24V17A17 17 0 0 1 17 0h43a17 17 0 0 1 17 17v7z" fill="#e55b51" />
          <text x="38.500" y="18.500" class="fv semi" font-size="15" text-anchor="middle" fill="#fff">JUL</text><text x="37.500" y="65" class="fv" font-size="47" font-weight="300" text-anchor="middle" fill="#2b2b2b" letter-spacing="-2">13</text>
        {:else if name === 'notes'}
          <rect width="77" height="77" rx="17" fill="#f4f3ef" /><path d="M0 19v-2A17 17 0 0 1 17 0h43a17 17 0 0 1 17 17v2z" fill="#f8cc45" /><path d="M0 20h77" stroke="#b9b19c" stroke-width="1.500" /><path d="M2 23h73" stroke="#aaa" stroke-width="1.500" stroke-dasharray="1 2" /><path d="M0 38.500h77M0 58h77" stroke="#c8c7c2" stroke-width="1.300" />
        {:else if name === 'keynote'}
          <rect width="77" height="77" rx="17" fill="url(#blue)" />{@render keynoteGlyph()}
        {:else if name === 'settings'}
          <rect width="77" height="77" rx="17" fill="#b5babd" /><circle cx="38.500" cy="38.500" r="31" fill="#3c3e40" /><circle cx="38.500" cy="38.500" r="32" fill="none" stroke="#222" stroke-width="4" stroke-dasharray="2 2" />
          <circle cx="38.500" cy="38.500" r="25" fill="none" stroke="#a9adb0" stroke-width="4" /><circle cx="38.500" cy="38.500" r="13" fill="#444" stroke="#85898b" stroke-width="3.500" /><path d="M38.500 38.500h26M38.500 38.500l-13-22M38.500 38.500l-13 22" stroke="#b8bcbf" stroke-width="4" /><circle cx="38.500" cy="38.500" r="4" fill="#2c2d2e" />
          <circle cx="70.500" cy="9" r="19" fill="#dd4b3f" /><text x="70.500" y="16" class="fv" font-size="20" text-anchor="middle" fill="#fff">1</text>
        {:else if name === 'spotify'}
          <circle cx="38.500" cy="38.500" r="40" fill="#66d36e" /><g fill="none" stroke="#0c120c" stroke-linecap="round"><path d="M14 26c17-5 36-3 50 6" stroke-width="7.500" /><path d="M17 39c14-4 30-2 42 6" stroke-width="6" /><path d="M19 52c12-3 24-2 35 5" stroke-width="5" /></g>
        {:else if name === 'outlook'}
          <rect width="77" height="77" rx="17" fill="#fff" /><path d="M22 13h38a2 2 0 0 1 2 2v46a2 2 0 0 1-2 2H22z" fill="#2f7ad1" /><path d="M22 13h40v7H22z" fill="#2157a4" /><path d="M36 20h13v12H36zM49 32h14v12H49z" fill="#3fa4ea" /><path d="M49 20h14v12H49z" fill="#72d3fb" /><path d="M22 63l20-15 21 15z" fill="#57b2ee" /><path d="M42 48l21-9v24z" fill="#4a9fe4" /><rect x="7" y="24" width="28" height="28" rx="3" fill="#2466c6" /><text x="21" y="46" class="fv bold" font-size="22" text-anchor="middle" fill="#fff">O</text>
        {:else if name === 'excel'}
          <rect width="77" height="77" rx="17" fill="#fff" />{@render excelGlyph()}
        {:else if name === 'word'}
          <rect width="77" height="77" rx="17" fill="#fff" /><path d="M20 13h44v51H20z" fill="#3568c8" /><path d="M20 13h42a2 2 0 0 1 2 2v11H20z" fill="#5b9de8" /><path d="M20 26h44v13H20z" fill="#3f79d3" /><path d="M20 51h44v11a2 2 0 0 1-2 2H22a2 2 0 0 1-2-2z" fill="#1e3d85" /><rect x="7" y="24" width="28" height="28" rx="3" fill="#2551b4" /><text x="21" y="45.500" class="fv bold" font-size="20" text-anchor="middle" fill="#fff">W</text>
        {:else if name === 'whatsapp'}
          <rect width="77" height="77" rx="17" fill="url(#wa)" /><path d={whatsappPath} fill="#fff" transform="translate(8.500 2.500) scale(.134 .138)" />
        {:else if name === 'calendar31'}
          <path d="M3 8l57-7 3 8 8 2 3 60-58 7-3-11-6-1z" fill="#fff" stroke="#fff" stroke-width="6" stroke-linejoin="round" /><path d="M3 6l56-5 1 10-48 4v52l-7-2z" fill="#000" /><path d="M14 17l58-4 1 58-56 5z" fill="#000" /><path d="M18 31l51-4v38l-48 6z" fill="#fff" /><text x="43" y="64" class="serif" font-weight="700" font-size="42" text-anchor="middle" fill="#000" transform="rotate(-4 45 50)" letter-spacing="-2">31</text>
        {:else if name === 'ring'}
          <circle cx="38.500" cy="36" r="44.500" fill="#fff" /><circle cx="38.500" cy="36" r="31" fill="none" stroke="#944b83" stroke-width="16" />
        {:else if name === 'phone'}
          <rect width="77" height="77" rx="17" fill="#c7c8c1" /><rect x="22.500" y="5.500" width="32" height="66" rx="5" fill="#2d7390" stroke="#111" stroke-width="1.800" /><path d="M24 10a3 3 0 0 1 3-3h23a3 3 0 0 1 3 3v18C40 34 34 48 24 56z" fill="#f3a79c" /><path d="M53 12v16C44 33 38 38 34 46c2-14 8-28 19-34z" fill="#8f8f9c" /><path d="M53 40C42 44 34 54 26 70h24a3 3 0 0 0 3-3z" fill="#1d5673" /><rect x="33" y="7.500" width="11" height="3.500" rx="1.700" fill="#111" />
        {:else if name === 'replit'}
          <rect width="77" height="77" rx="17" fill="#161a24" /><g fill="#ec632c"><rect x="21" y="14.500" width="20" height="16.500" rx="2" /><rect x="41" y="30.500" width="20" height="16" rx="2" /><rect x="21" y="46.500" width="20" height="16" rx="2" /></g>
        {:else if name === 'github'}
          <rect width="77" height="77" rx="17" fill="url(#purple)" /><circle cx="38.500" cy="38.500" r="32" fill="#f1eef6" /><path d="M22 20l8 4c6-2 12-2 18 0l8-4 1 11c6 10 1 22-10 23l1 17h-19V60c-8 1-8-5-13-8 7-1 7 5 13 3l2-4C19 48 16 38 21 31z" fill="#6a32a0" />
        {:else if name === 'vscode'}
          <rect width="77" height="77" rx="17" fill="#fff" /><path d="M50 12l14 6v41l-14 6z" fill="#3f94e6" /><path d="M50 12v14L17 52l-6-6z" fill="#2566a8" /><path d="M50 65V51L17 25l-6 6z" fill="#3078c6" />
        {:else if name === 'acrobat'}
          <rect width="77" height="77" rx="17" fill="#a82317" />{@render acrobatGlyph()}
        {:else if name === 'preview'}
          <rect width="77" height="77" rx="17" fill="#f4f5f6" /><rect x="6" y="6" width="65" height="65" rx="11" fill="#96b5ee" /><path d="M6 42h65v18a11 11 0 0 1-11 11H17A11 11 0 0 1 6 60z" fill="#2c3e63" /><path d="M6 50l12 3 10 6 8 12H17A11 11 0 0 1 6 60z" fill="#85684a" /><path d="M16 54l12-2 7 8-14 5z" fill="#e7e9ec" />
          <rect x="39" y="38" width="34" height="17" rx="6" fill="#161616" /><path d="M43 55h26l9 19c1 5-2 7-7 7H41c-5 0-8-2-7-7z" fill="#8f9498" /><path d="M46 57h20l8 17H38z" fill="#e9ebed" /><path d="M48 66l8-4 8 6-9 5z" fill="#aeb3b7" />
        {:else if name === 'earth'}
          <circle cx="38.500" cy="37" r="43.500" fill="#9aa4b4" /><g fill="none" stroke="#eceeee" stroke-width="10"><path d="M4 18C26 12 34 36 76 56" /><path d="M-3 38c22-8 34 16 58 40" /><path d="M30-2c10 4 22 16 46 26" stroke-width="11" /></g><rect x="13" y="57.500" width="50" height="24" rx="4" fill="#3a3b38" /><text x="38" y="76.500" class="fv" font-size="19" text-anchor="middle" fill="#fff">Pro</text>
        {/if}
      </g>
    {/if}
    {#if running}<circle cx="52.350" cy="118" r="4" fill="#0b0d06" />{/if}
  </svg>
{/snippet}

<div class="desktop">
  <svg class="wallpaper" viewBox="0 0 3420 2214" preserveAspectRatio="none">
    <defs>
      <linearGradient id="sky" x1="0" y1="0" x2="0" y2="1"><stop offset="0" stop-color="#5577b0" /><stop offset=".26" stop-color="#56719f" /><stop offset=".29" stop-color="#1f2a40" /><stop offset=".34" stop-color="#2f4066" /><stop offset=".38" stop-color="#0f1418" /><stop offset=".6" stop-color="#10160c" /><stop offset=".9" stop-color="#2a3416" /><stop offset="1" stop-color="#2e3a14" /></linearGradient>
      <linearGradient id="skyRight" x1="0" y1="0" x2="0" y2="1"><stop offset="0" stop-color="#7d90cc" /><stop offset=".36" stop-color="#8297ba" /><stop offset=".4" stop-color="#161b22" /><stop offset="1" stop-color="#2e3a14" /></linearGradient>
      <linearGradient id="gem" x1="0" x2="1"><stop offset="0" stop-color="#8a76c9" /><stop offset="1" stop-color="#2f8fe0" /></linearGradient>
      <linearGradient id="blue" x1="0" y1="0" x2="0" y2="1"><stop offset="0" stop-color="#5ec4fa" /><stop offset="1" stop-color="#2e60e8" /></linearGradient>
      <linearGradient id="mail" x1="0" y1="0" x2="0" y2="1"><stop offset="0" stop-color="#3470ee" /><stop offset="1" stop-color="#58bdf8" /></linearGradient>
      <linearGradient id="wa" x1="0" y1="0" x2="0" y2="1"><stop offset="0" stop-color="#86f37d" /><stop offset="1" stop-color="#55bf49" /></linearGradient>
      <linearGradient id="purple" x1="0" y1="0" x2="0" y2="1"><stop offset="0" stop-color="#8a37ad" /><stop offset="1" stop-color="#552c8c" /></linearGradient>
      <linearGradient id="bin" x1="0" x2="1"><stop offset="0" stop-color="#cfcfcf" /><stop offset=".4" stop-color="#ececec" /><stop offset="1" stop-color="#c4c4c4" /></linearGradient>
      <filter id="grass" x="0" y="0" width="100%" height="100%" color-interpolation-filters="sRGB">
        <feTurbulence type="fractalNoise" baseFrequency=".02 .07" numOctaves="5" seed="11" />
        <feColorMatrix values=".8 0 0 0 -.2  .85 0 0 0 -.165  .4 0 0 0 -.12  0 0 0 0 1" />
      </filter>
    </defs>
    <rect width="1710" height="2214" fill="url(#sky)" /><rect x="1710" width="1710" height="2214" fill="url(#skyRight)" />
    <rect y="2040" width="3420" height="174" filter="url(#grass)" />
  </svg>

  <div class="menubar">
    <svg class="apple" viewBox="0 0 24 24"><path d="M12.152 6.896c-.948 0-2.415-1.078-3.960-1.040-2.040.027-3.910 1.183-4.961 3.014-2.117 3.675-.546 9.103 1.519 12.090 1.013 1.454 2.208 3.090 3.792 3.039 1.520-.065 2.090-.987 3.935-.987 1.831 0 2.350.987 3.960.948 1.637-.026 2.676-1.480 3.676-2.948 1.156-1.688 1.636-3.325 1.662-3.415-.039-.013-3.182-1.221-3.220-4.857-.026-3.040 2.480-4.494 2.597-4.559-1.429-2.090-3.623-2.324-4.390-2.376-2-.156-3.675 1.090-4.610 1.090zM15.530 3.830c.843-1.012 1.400-2.427 1.245-3.830-1.207.052-2.662.805-3.532 1.818-.780.896-1.454 2.338-1.273 3.714 1.338.104 2.715-.688 3.559-1.701" fill="#fff" /></svg>
    <b class="app-name">Chrome</b>
    {#each menus as [label, w]}<span class="menu" style="width:{w}px">{label}</span>{/each}
    <div class="status">
      <svg class="s74" viewBox="0 0 74 40"><rect y="4" width="32" height="32" rx="4" fill="#edf1f6" /><path d="M12 9h9l7 14-4 8H8l-4-7z" fill="#6483b3" /><path d="M16 18l-5 9h10z" fill="#fff" /></svg>
      <svg class="s72" viewBox="0 0 72 40"><path d="M2 6l23 28" stroke="#e8eef5" stroke-width="2.600" stroke-linecap="round" /><path d="M19 7v15L10 13zM3 15h4l12 14v4L9 25H3z" fill="#dfe6f0" /></svg>
      <svg class="s61" viewBox="0 0 61 40"><path d="M1 12l17 15-9 7V6l9 7L1 28" fill="none" stroke="#f2f5f9" stroke-width="2.400" /></svg>
      <svg class="s67" viewBox="0 0 67 40"><rect x="1.500" y="8" width="27" height="23" rx="4" fill="none" stroke="#f2f5f9" stroke-width="2.600" /><path d="M2 13h26" stroke="#f2f5f9" stroke-width="2.500" /><path d="M6 18h8M6 22h8M6 26h8M18 18h6M18 22h6M18 26h6" stroke="#f2f5f9" stroke-width="2" /></svg>
      <span class="pct">94%</span>
      <svg class="s90" viewBox="0 0 90 40"><rect x="1" y="8.500" width="44" height="23" rx="7" fill="none" stroke="#c2cddf" stroke-width="2" /><rect x="4" y="11.500" width="36" height="17" rx="4" fill="#f7ce46" /><path d="M48 16v8c3-1 3-7 0-8z" fill="#c2cddf" /></svg>
      <svg class="s74" viewBox="0 0 74 40"><g fill="none" stroke="#fff" stroke-width="4.400"><path d="M2 17a21 21 0 0 1 30 0" /><path d="M8 23.500a13 13 0 0 1 18 0" /></g><path d="M17 34l-5-6a7 7 0 0 1 10 0z" fill="#fff" /></svg>
      <svg class="s66" viewBox="0 0 66 40"><circle cx="10.500" cy="17" r="9" fill="none" stroke="#fff" stroke-width="2.600" /><path d="M17 24l7 8" stroke="#fff" stroke-width="3" stroke-linecap="round" /></svg>
      <svg class="s64" viewBox="0 0 64 40"><rect x="1" y="7" width="25" height="11" rx="5.500" fill="none" stroke="#fff" stroke-width="2.400" /><circle cx="7" cy="12.500" r="3.600" fill="#fff" /><rect y="21" width="27" height="13" rx="6.500" fill="#fff" /><circle cx="20" cy="27.500" r="3.500" fill="#6381b3" /><circle cx="31.500" cy="20" r="4.500" fill="#5c5fe0" /></svg>
      <span class="date">Dom jul 13</span><span class="time">15:04</span>
    </div>
  </div>

  <div class="window">
    <div class="tabstrip">
      <div class="lights"><i class="red"></i><i class="amber"></i><i class="green"></i></div>
      {#each tabs as t}
        <div class="tab" class:active={t.active} class:sep={!t.plain} style="width:{t.w}px">
          <span class="tab-icon" class:ringed={t.ring}>
            {#if t.ring}<svg class="ring" viewBox="0 0 42 42"><circle cx="21" cy="21" r="19.500" fill="none" stroke="#76876f" stroke-width="2.400" stroke-dasharray="12 5 12 5 10 5 46 6" /></svg>{/if}
            {@render favicon(t.icon)}
          </span>
          {#if t.active}
            <svg class="close" viewBox="0 0 20 20"><path d="M3 3l14 14M17 3L3 17" stroke="#202124" stroke-width="2.800" /></svg>
          {:else}<span class="tab-label">{t.label}</span>{/if}
        </div>
      {/each}
      <svg class="plus" viewBox="0 0 22 22"><path d="M11 0v22M0 11h22" stroke="#202124" stroke-width="2.800" /></svg>
      <div class="tab-menu"><svg viewBox="0 0 18 12"><path d="M2 2l7 7 7-7" fill="none" stroke="#202124" stroke-width="2.800" /></svg></div>
    </div>

    <div class="toolbar">
      <div class="toolbtn"><svg viewBox="0 0 32 32"><path d="M28 16H6M16 5L5 16l11 11" fill="none" stroke="#1f2023" stroke-width="2.800" /></svg></div>
      <div class="toolbtn"><svg viewBox="0 0 32 32"><path d="M4 16h22M16 5l11 11-11 11" fill="none" stroke="#a0a1a3" stroke-width="2.800" /></svg></div>
      <div class="toolbtn"><svg viewBox="0 0 32 32"><path d="M26 18A10.500 10.500 0 1 1 24 9l2.500 3.500M27 4v9h-9" fill="none" stroke="#1f2023" stroke-width="2.800" /></svg></div>
      <div class="omnibox">
        <div class="site"><svg viewBox="0 0 26 26"><g fill="none" stroke="#202124" stroke-width="2.600"><circle cx="6" cy="7" r="4" /><path d="M13 7h12M1 19h12" /><circle cx="20" cy="19" r="4" /></g></svg></div>
        <span class="url">a6481a0e-1b17-48e5-925f-133729b45681-00-1ypwsu92tle9.worf.replit.dev<em>/#marketplace</em></span>
        <svg class="star" viewBox="0 0 32 32"><path d="M16 3.500l3.700 8.700 9.500.8-7.200 6.200 2.200 9.300-8.200-5-8.200 5L10 19.200 2.800 13l9.500-.8z" fill="none" stroke="#5f6368" stroke-width="2.600" /></svg>
      </div>
      <svg class="puzzle" viewBox="0 0 36 36"><path d="M5 7h9.500c0-5 7-5 7 0H29v9.500c5 0 5 7 0 7V31H5v-8.500c5 0 5-7 0-7z" fill="none" stroke="#1f2023" stroke-width="3" stroke-linejoin="round" /></svg>
      <i class="vbar"></i>
      <svg class="avatar" viewBox="0 0 40 40"><circle cx="20" cy="20" r="20" fill="#a9a9a9" /><path d="M0 20h9l3 12-7 3A20 20 0 0 1 0 20z" fill="#4f4f4f" /><path d="M8 14C10 2 28-2 35 9l-2 8-9-4-12 5-2 10z" fill="#2e2e2e" /><path d="M14 15c5-3 13-2 16 0l2 11-6 8-8-2-5-8z" fill="#d2d2d2" /><path d="M16 17h7v4h-7zM25 17h7v4h-6z" fill="#1c1c1c" /><path d="M12 24l5 2 3 6 6 2-3 6a20 20 0 0 1-15-4z" fill="#1f1f1f" /><path d="M20 28h7v2h-7z" fill="#555" /></svg>
      <div class="update"><span>Finalizar actualización</span><svg viewBox="0 0 8 28"><circle cx="4" cy="3" r="3" /><circle cx="4" cy="14" r="3" /><circle cx="4" cy="25" r="3" /></svg></div>
    </div>

    <div class="bookmarks">
      <svg class="apps" viewBox="0 0 28 28"><g fill="none" stroke="#1f2023" stroke-width="3"><path d="M1.500 1.500h9v9h-9zM17.500 1.500h9v9h-9zM1.500 17.500h9v9h-9zM17.500 17.500h9v9h-9z" /></g></svg>
      <i class="vbar bm"></i>
      {#each bookmarks as [icon, label, w]}
        <div class="bookmark" style="width:{w}px">{@render favicon(icon)}<span>{label}</span></div>
      {/each}
      <svg class="more" viewBox="0 0 20 18"><path d="M2 1l8 8-8 8M10 1l8 8-8 8" fill="none" stroke="#1f2023" stroke-width="2.600" /></svg>
    </div>

    <div class="viewport">
      <div class="page">
        <header>
          <svg class="logo" viewBox="0 0 112 112">
            <rect width="112" height="112" rx="16" fill="#fff" />
            <g fill="none" stroke="#15130f" stroke-width="3.500">
              <path d="M30 23A46 46 0 0 1 96 76M86 88A46 46 0 0 1 11 45" stroke-width="3" />
              <circle cx="57" cy="56" r="34.500" /><ellipse cx="57" cy="56" rx="17" ry="34.500" /><path d="M57 21v70M30 34c14 8 40 8 54 0M30 78c14-8 40-8 54 0" stroke-width="2.800" />
              <path d="M26 14l-1 9 9 1M79 89l9-1-1 9" stroke-width="3" />
            </g>
            <path d="M10 41l34-1 56 1 4 17-18 4-4 17-48 2-3-19-20-3z" fill="#15130f" />
            <g class="fv black" text-anchor="middle" fill="#dfa92f" stroke="#15130f" stroke-width="4" paint-order="stroke"><text x="56" y="58.500" font-size="23" textLength="92" lengthAdjust="spacingAndGlyphs">GLOBAL</text><text x="57" y="79" font-size="23" textLength="46" lengthAdjust="spacingAndGlyphs">BIDS</text></g>
          </svg>
          <div class="brand"><h1>Global Bids</h1><p>Marketplace y Subastas</p></div>
          <nav>
            {#each nav as [icon, label, w]}
              <a style="width:{w}px">{@render pageIcon(icon)}<span>{label}</span></a>
            {/each}
            <i class="nav-sep"></i>
            <a class="current">{@render pageIcon('grid')}<span>Marketplace</span></a>
          </nav>
          <div class="lang">
            <div class="lang-opt on">
              <svg viewBox="0 0 40 30"><rect width="40" height="30" rx="6" fill="#9e2a24" /><path d="M0 7h40v16H0z" fill="#e6bf3e" /></svg>ES
            </div>
            <div class="lang-opt">
              <svg viewBox="0 0 40 30"><clipPath id="uk"><rect width="40" height="30" rx="6" /></clipPath><g clip-path="url(#uk)"><path d="M0 0h40v30H0z" fill="#3a4a80" /><path d="M0 0l40 30M40 0L0 30" stroke="#fff" stroke-width="6" /><path d="M0 0l40 30M40 0L0 30" stroke="#cc4453" stroke-width="2" /><path d="M20 0v30M0 15h40" stroke="#fff" stroke-width="11" /><path d="M20 0v30M0 15h40" stroke="#cc4453" stroke-width="6.500" /></g></svg>EN
            </div>
          </div>
        </header>

        <main>
          <section class="filters">
            <div class="field"><label for="q">Buscar por palabra clave</label>
              <div class="input" id="q"><svg viewBox="0 0 512 512"><path d={searchPath} /></svg>caterpillar</div>
            </div>
            <div class="field"><label for="f">Familia de equipos</label>
              <div class="select" id="f">Excavadora (34)<svg viewBox="0 0 18 12"><path d="M2 2l7 7 7-7" /></svg></div>
            </div>
            <div class="field"><label for="c">Condición</label>
              <div class="select" id="c">Todas las condiciones<svg viewBox="0 0 18 12"><path d="M2 2l7 7 7-7" /></svg></div>
            </div>
            <button><svg viewBox="0 0 512 512"><path d="M3.900 54.900C10.500 40.900 24.500 32 40 32H472c15.500 0 29.500 8.900 36.100 22.900s4.600 30.500-5.200 42.500L320 320.900V448c0 12.100-6.800 23.200-17.700 28.600s-23.800 4.300-33.500-3l-64-48c-8.100-6-12.800-15.500-12.800-25.600V320.900L9 97.300C-.7 85.400-2.800 68.800 3.900 54.900z" /></svg>Aplicar Filtros</button>
          </section>
          <div class="results">
            <p>Mostrando <b>0</b> resultados</p>
            <div class="sort"><span>Ordenar por:</span><div class="select">Nombre: A-Z<svg viewBox="0 0 18 12"><path d="M2 2l7 7 7-7" /></svg></div></div>
          </div>
          <div class="empty">
            <svg viewBox="0 0 512 512"><path d={searchPath} /></svg>
            <h3>No se encontraron resultados</h3>
            <p>Intenta con otros filtros de búsqueda</p>
          </div>
        </main>

        <footer>
          <h2>Contáctanos</h2>
          <i class="rule"></i>
          <p>Estamos aquí para ayudarte</p>
          <div class="contact">
            <div class="contact-head"><svg viewBox="0 0 24 32"><path d="M12 0a12 12 0 0 1 12 12c0 7-8 15-12 20C8 27 0 19 0 12A12 12 0 0 1 12 0z" /></svg><span>Centro Logístico</span></div>
            <div class="contact-card"></div>
          </div>
        </footer>

        <div class="fab wa"><svg viewBox="0 0 448 512"><path d={whatsappPath} /></svg></div>
        <div class="fab up"><svg viewBox="0 0 24 28"><path d="M12 26V3M2 12L12 2l10 10" /></svg></div>
      </div>
      <div class="scrollbar"><i></i></div>
    </div>
  </div>

  <div class="dock">
    {#each dockApps as [name, on]}{@render dockIcon(name, on)}{/each}
    <i class="dock-sep"></i>
    {#each dockTools as [name, on]}{@render dockIcon(name, on)}{/each}
    <i class="dock-sep"></i>
    {#each dockFiles as name}{@render dockIcon(name, 0)}{/each}
  </div>
</div>

<style>
  :global(body) { background: #1a2210; overflow: hidden; }
  .desktop { position: relative; display: flex; flex-direction: column; width: 3420px; height: 2214px; overflow: hidden; font-family: Inter, 'Liberation Sans', sans-serif; box-sizing: border-box; }
  .desktop :global(*) { box-sizing: border-box; }
  svg { display: block; flex: none; overflow: visible; }
  i, em { font-style: normal; display: block; flex: none; }
  h1, h2, h3, p { margin: 0; }
  .fv { font-family: Inter, 'Liberation Sans', sans-serif; }
  .serif { font-family: 'Liberation Serif', serif; }
  .semi { font-weight: 600; }
  .bold { font-weight: 700; }
  .black { font-weight: 900; }
  .wallpaper { position: absolute; inset: 0; width: 3420px; height: 2214px; }

  .menubar { position: relative; display: flex; align-items: center; height: 76px; padding: 0 0 3px 38px; background: linear-gradient(90deg, #4b6ba3, #5171a9 35%, #5b79ad 60%, #6482b4); color: #fff; font-size: 25.500px; font-weight: 500; letter-spacing: -.35px; white-space: nowrap; text-shadow: 0 2px 6px rgba(20, 30, 60, .45); }
  .apple { width: 31px; height: 31px; margin-right: 39px; }
  .app-name { width: 143px; font-weight: 700; letter-spacing: 0; }
  .menu { flex: none; }
  .status { display: flex; align-items: center; width: 874px; margin-left: auto; color: #f3f6fa; }
  .status svg { height: 40px; }
  .s74 { width: 74px; } .s72 { width: 72px; } .s61 { width: 61px; } .s67 { width: 67px; } .s90 { width: 90px; } .s66 { width: 66px; } .s64 { width: 64px; }
  .pct { width: 57px; font-size: 22.500px; }
  .date { width: 146px; letter-spacing: .3px; }
  .time { letter-spacing: .4px; }

  .window { position: relative; display: flex; flex-direction: column; width: 3400px; height: 1994px; margin: 2px 0 0 16px; border-radius: 20px; overflow: hidden; background: #d2e8c2; flex: none; box-shadow: 0 0 0 1px rgba(20, 30, 50, .5), 0 10px 30px rgba(0, 0, 0, .45); }
  .tabstrip { --tab-bg: #d2e8c2; display: flex; align-items: center; height: 80px; flex: none; color: #202124; font-size: 24px; box-shadow: inset 0 2px #e8f4df; }
  .lights { display: flex; gap: 16px; width: 178px; padding-left: 42px; }
  .lights i { width: 24px; height: 24px; border-radius: 50%; }
  .red { background: #ed6a5e; } .amber { background: #f4bf4f; } .green { background: #61c554; }
  .tab { position: relative; display: flex; align-items: center; height: 68px; padding: 0 0 0 17px; flex: none; }
  .tab-icon { position: relative; display: flex; align-items: center; justify-content: center; width: 42px; height: 42px; margin-right: 12px; flex: none; }
  .ring { position: absolute; inset: 0; width: 42px; height: 42px; }
  .fav { width: 32px; height: 32px; }
  .ringed .fav { width: 29px; height: 29px; }
  .globe-land { fill: var(--tab-bg); }
  .tab-label { width: 44px; overflow: hidden; white-space: nowrap; letter-spacing: -.8px; mask-image: linear-gradient(90deg, #000 60%, transparent); }
  .tab.sep::after { content: ''; position: absolute; right: -2px; top: 18px; width: 4px; height: 32px; border-radius: 2px; background: #fff; }
  .tab.active { --tab-bg: #fff; height: 68px; margin-top: 12px; padding-bottom: 12px; z-index: 1; }
  .tab.active::before { content: ''; position: absolute; left: 6px; top: 0; width: 124px; height: 70px; background: #fff; border-radius: 20px 20px 0 0; z-index: -1; }
  .tab.active::after { content: ''; position: absolute; left: -14px; right: -14px; bottom: 0; height: 20px; background: radial-gradient(circle at 0 0, transparent 19.500px, #fff 20px) 0 0 / 20px 20px no-repeat, radial-gradient(circle at 100% 0, transparent 19.500px, #fff 20px) 100% 0 / 20px 20px no-repeat; }
  .close { width: 18px; height: 18px; margin-left: 18px; }
  .plus { width: 22px; height: 22px; margin-left: 23px; }
  .tab-menu { display: flex; align-items: center; justify-content: center; width: 56px; height: 56px; margin: 0 12px 0 auto; border-radius: 20px; background: #fff; }
  .tab-menu svg { width: 18px; height: 12px; }

  .toolbar { display: flex; align-items: center; height: 80px; padding-top: 12px; background: #fff; border-radius: 20px 20px 0 0; flex: none; color: #202124; }
  .toolbtn { display: flex; justify-content: center; width: 72px; }
  .toolbtn:first-child { margin-left: 8px; }
  .toolbtn svg { width: 30px; height: 30px; }
  .omnibox { display: flex; align-items: center; width: 2592px; height: 68px; margin-left: 16px; padding: 0 32px 0 10px; border-radius: 34px; background: #e1e1e1; font-size: 28px; }
  .site { display: flex; align-items: center; justify-content: center; width: 48px; height: 48px; border-radius: 50%; background: #fff; margin-right: 16px; }
  .site svg { width: 26px; height: 26px; }
  .url { flex: 1; padding-top: 1px; white-space: nowrap; letter-spacing: .21px; }
  .url em { display: inline; color: #5f6368; }
  .star { width: 34px; height: 34px; }
  .puzzle { width: 36px; height: 36px; margin-left: 34px; }
  .vbar { width: 4px; height: 32px; border-radius: 2px; background: #d2e8c2; margin-left: 34px; }
  .avatar { width: 40px; height: 40px; margin-left: 32px; }
  .update { display: flex; align-items: center; justify-content: space-between; width: 352px; height: 68px; margin-left: 24px; padding: 0 28px 0 24px; border-radius: 34px; background: #d2e8c2; font-size: 26px; font-weight: 500; letter-spacing: -.25px; white-space: nowrap; }
  .update svg { width: 8px; height: 28px; }

  .bookmarks { display: flex; align-items: center; height: 82px; padding: 0 0 2px 38px; background: #fff; border-bottom: 2px solid #c8cbd0; flex: none; color: #202124; font-size: 24px; }
  .apps { width: 28px; height: 28px; }
  .vbar.bm { margin: 0 28px 0 30px; }
  .bookmark { display: flex; align-items: center; gap: 12px; flex: none; white-space: nowrap; letter-spacing: -.35px; }
  .more { width: 20px; height: 18px; margin-left: 230px; }

  .viewport { display: flex; flex: 1; min-height: 0; }
  .page { position: relative; width: 3384px; background: #faf6f5; color: #4b5563; font-size: 32px; letter-spacing: -.68px; overflow: hidden; }
  .scrollbar { width: 16px; background: #f0f0f0; padding-top: 1361px; }
  .scrollbar i { height: 225px; border-radius: 8px; background: #878787; }

  header { position: relative; z-index: 2; display: flex; align-items: center; height: 160px; padding-left: 188px; background: #111628; color: #fff; box-shadow: 0 8px 36px rgba(0, 0, 0, .24); }
  .logo { width: 112px; height: 112px; letter-spacing: 0; }
  .brand { width: 595px; margin-left: 24px; padding-top: 4px; }
  h1 { font-size: 48px; line-height: 56px; font-weight: 800; letter-spacing: -.900px; }
  .brand p { margin-top: 4px; font-size: 24px; line-height: 36px; letter-spacing: .2px; color: #dfe0e4; }
  nav { display: flex; align-items: center; width: 1997px; font-weight: 500; letter-spacing: -.45px; }
  nav a { display: flex; align-items: center; gap: 17px; flex: none; white-space: nowrap; }
  nav a span { padding-top: 1px; }
  nav svg { fill: #cfd0d4; }
  .i36 { width: 36px; height: 32px; } .i40 { width: 40px; height: 32px; } .i32 { width: 32px; height: 32px; }
  .nav-sep { width: 2px; height: 30px; margin: 6px 34px 0 36px; background: #4a4f5e; }
  .current { color: #f2c94c; letter-spacing: -.2px; }
  .lang { display: flex; align-items: center; width: 280px; height: 80px; padding: 0 8px; border-radius: 40px; background: #f3f4f6; color: #5d6472; font-size: 27px; letter-spacing: -.2px; }
  .lang-opt { display: flex; align-items: center; gap: 9px; height: 64px; padding: 0 24px; border-radius: 32px; width: 131px; }
  .lang-opt.on { background: #111628; color: #fff; }
  .lang-opt svg { width: 40px; height: 30px; }

  main { height: 1244px; padding: 34px 188px 0; }
  .filters { display: grid; grid-template-columns: repeat(3, 1fr); column-gap: 32px; height: 340px; padding: 48px; background: #fff; border-radius: 16px; box-shadow: 0 8px 12px -2px rgba(0, 0, 0, .1), 0 4px 8px -2px rgba(0, 0, 0, .08); align-content: start; }
  label { display: block; height: 40px; margin-bottom: 8px; line-height: 40px; font-size: 27.500px; font-weight: 500; letter-spacing: 0; color: #374151; }
  .input { display: flex; align-items: center; gap: 27px; height: 84px; padding-left: 20px; border: 4px solid #2a5fcb; border-radius: 16px; background: #fff; color: #111628; box-shadow: 0 0 0 2px #fff, 0 0 0 4px #f2cf4e; }
  .input svg { width: 32px; height: 32px; fill: #9ca3af; }
  .select { display: flex; align-items: center; justify-content: space-between; height: 78px; padding: 0 6px 0 24px; border: 2px solid #d1d5db; border-radius: 16px; background: #fff; color: #111628; }
  .select svg { width: 18px; height: 12px; fill: none; stroke: #111628; stroke-width: 2; }
  button { grid-column: 3; justify-self: end; display: flex; align-items: center; justify-content: center; gap: 17px; width: 322px; height: 80px; margin-top: 32px; border: 0; border-radius: 16px; background: #111628; color: #fff; font: 500 32px Inter, sans-serif; white-space: nowrap; letter-spacing: -.1px; }
  button svg { width: 32px; height: 32px; fill: #fff; }
  .results { display: flex; align-items: center; justify-content: space-between; height: 78px; margin-top: 64px; }
  .results p { padding-top: 1px; }
  .results b { font-weight: 600; }
  .sort { display: flex; align-items: center; gap: 17px; }
  .sort .select { width: 441px; }
  .empty { display: flex; flex-direction: column; align-items: center; margin-top: 144px; }
  .empty svg { width: 96px; height: 96px; fill: #9ca3af; }
  h3 { margin-top: 33px; font-size: 40px; line-height: 56px; font-weight: 600; letter-spacing: -1.150px; }
  .empty p { margin-top: 16px; line-height: 48px; color: #6b7280; }

  footer { display: flex; flex-direction: column; align-items: center; padding-top: 16px; background: #111628; color: #fff; }
  h2 { font-size: 73px; line-height: 80px; font-weight: 800; letter-spacing: 1.800px; }
  .rule { width: 160px; height: 8px; margin-top: 32px; background: #f2cd46; }
  footer p { margin-top: 45px; line-height: 56px; }
  .contact { display: grid; grid-template-columns: 1456px 1456px; gap: 96px; margin-top: 91px; }
  .contact-head { display: flex; gap: 36px; font-size: 36px; line-height: 56px; font-weight: 600; padding-left: 4px; }
  .contact-head svg { width: 24px; height: 32px; margin-top: 16px; fill: #f2cd46; }
  .contact-card { height: 200px; border-radius: 16px; background: linear-gradient(#f0f0f0, #e2e2e2 22px); }
  .fab { position: absolute; z-index: 3; display: flex; align-items: center; justify-content: center; right: 40px; box-shadow: 0 10px 20px rgba(0, 0, 0, .2); }
  .fab.wa { top: 1488px; width: 83px; height: 104px; border-radius: 42px; background: #5fc468; }
  .fab.up { top: 1616px; width: 72px; height: 96px; border-radius: 36px; background: #f2cd46; }
  .fab.wa svg { width: 35px; height: 40px; fill: #fff; }
  .fab.up svg { width: 24px; height: 28px; fill: none; stroke: #111628; stroke-width: 4; stroke-linecap: round; stroke-linejoin: round; }

  .dock { position: relative; display: flex; align-items: stretch; width: 3246px; height: 126px; margin: 6px 0 0 87px; padding-left: 2.650px; border: 2px solid rgba(190, 198, 160, .5); border-radius: 40px; background: linear-gradient(90deg, #70765d, #7a805c 50%, #878e5e); flex: none; }
  .dock-icon { width: 104.700px; height: 126px; margin-top: -2px; }
  .dock-sep { position: relative; width: 48px; }
  .dock-sep::after { content: ''; position: absolute; left: 23px; top: 14px; width: 2px; height: 94px; background: #545a3c; }
</style>
